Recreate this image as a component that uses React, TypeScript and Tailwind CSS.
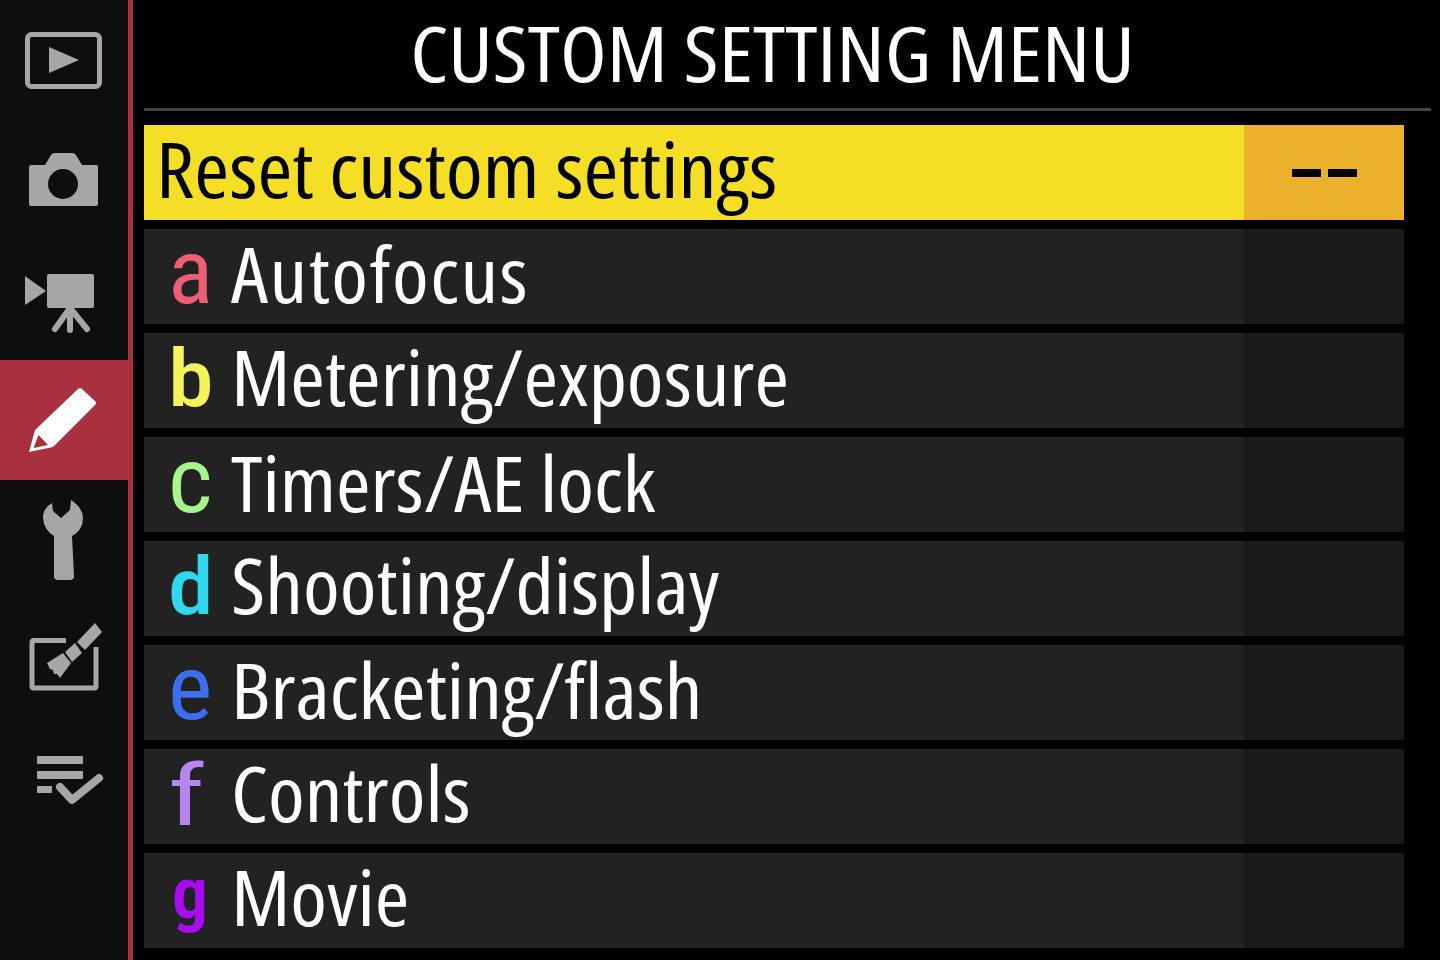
const iconGrey = '#a6a6a6';

const PlayIcon = () => (
  <svg width="128" height="120" viewBox="0 0 128 120" fill={iconGrey}>
    <rect x="27.5" y="34.5" width="72" height="52" rx="4" fill="none" stroke={iconGrey} strokeWidth="5" />
    <path d="M49 47 L79 60 L49 73 Z" />
  </svg>
);

const CameraIcon = () => (
  <svg width="128" height="120" viewBox="0 0 128 120" fill={iconGrey}>
    <path
      fillRule="evenodd"
      d="M31 45 H45 L51 35 Q52 33 55 33 H72 Q75 33 76 35 L82 45 H96 Q98 45 98 47 V84 Q98 86 96 86 H31 Q29 86 29 84 V47 Q29 45 31 45 Z M63 49 A15 15 0 1 0 63.01 79 A15 15 0 1 0 63 49 Z"
    />
  </svg>
);

const MovieIcon = () => (
  <svg width="128" height="120" viewBox="0 0 128 120" fill={iconGrey}>
    <path d="M25 36 L46 51 L25 65 Z" />
    <rect x="47" y="34" width="47" height="34" rx="2" />
    <path d="M70 66 V90 M70 68 L55 89 M70 68 L87 89" stroke={iconGrey} strokeWidth="6" fill="none" strokeLinecap="round" />
  </svg>
);

const PencilIcon = () => (
  <svg width="128" height="120" viewBox="0 0 128 120" fill="#ffffff">
    <path
      fillRule="evenodd"
      d="M78 29 Q80 27 82 29 L95 41 Q97 43 95 45 L53 87 L29 92 L35 70 Z M38.5 75 L33.5 88 L48 85 Z"
    />
  </svg>
);

const WrenchIcon = () => (
  <svg width="128" height="120" viewBox="0 0 128 120" fill={iconGrey}>
    <path d="M52 23 Q43 28 43 38 Q44 50 54 56 L54 96 Q54 100 58 100 H70 Q74 100 74 96 L72 56 Q83 50 83 38 Q83 28 71 20 L70 30 L61 38 L53 31 Z" />
  </svg>
);

const RetouchIcon = () => (
  <svg width="128" height="120" viewBox="0 0 128 120" fill={iconGrey}>
    <path d="M66 40.5 H34 Q32 40.5 32 42.5 V86 Q32 88 34 88 H94 Q96 88 96 86 V47" fill="none" stroke={iconGrey} strokeWidth="5" />
    <path d="M95 23 L102 32 L85 50 L77 42 Z" />
    <path d="M75 43 L82 53 L72 62 L65 52 Z" />
    <path d="M63 53 L71 63 L60 78 L57 74 L54 74 L53 70 L50 69 L47 63 Z" />
  </svg>
);

const MyMenuIcon = () => (
  <svg width="128" height="120" viewBox="0 0 128 120" fill={iconGrey}>
    <rect x="37" y="36" width="46" height="8" rx="1" />
    <rect x="37" y="51" width="46" height="8" rx="1" />
    <rect x="37" y="66" width="15" height="7" rx="1" />
    <path d="M60 67 L72 80 L99 58" fill="none" stroke={iconGrey} strokeWidth="8" strokeLinecap="round" strokeLinejoin="round" />
  </svg>
);

const tabs = [
  { id: 'play', icon: <PlayIcon /> },
  { id: 'photo', icon: <CameraIcon /> },
  { id: 'movie', icon: <MovieIcon /> },
  { id: 'custom', icon: <PencilIcon />, active: true },
  { id: 'setup', icon: <WrenchIcon /> },
  { id: 'retouch', icon: <RetouchIcon /> },
  { id: 'mymenu', icon: <MyMenuIcon /> },
];

// the coloured letters are not one consistent face, so each gets its own size
const rows = [
  { letter: 'a', label: 'Autofocus', labelFix: 'tracking-[1.4px]', color: 'text-[#ec5f72] text-[90px] scale-x-[1.05]' },
  { letter: 'b', label: 'Metering/exposure', labelFix: '', color: 'text-[#f3f35c] text-[80px] font-medium scale-x-[1.15]' },
  { letter: 'c', label: 'Timers/AE lock', labelFix: '', color: 'text-[#a5f48c] text-[92px] scale-x-[1.05]' },
  { letter: 'd', label: 'Shooting/display', labelFix: '', color: 'text-[#2fd8ee] text-[80px] font-medium scale-x-[1.15]' },
  { letter: 'e', label: 'Bracketing/flash', labelFix: '', color: 'text-[#3b6ff0] text-[90px] scale-x-[1.05]' },
  { letter: 'f', label: 'Controls', labelFix: '', color: 'text-[#b585f0] text-[86px] scale-x-[1.35] translate-y-[3px]' },
  { letter: 'g', label: 'Movie', labelFix: '', color: 'text-[#a80cf0] text-[72px] font-semibold translate-x-[4px] -translate-y-[8px]' },
];

export default function App() {
  return (
    <div className="flex h-[960px] w-[1440px] overflow-hidden bg-black font-['Open_Sans',sans-serif] text-white">
      <div className="h-full w-[133px] shrink-0 border-r-[5px] border-[#a8303f] bg-[#0e0e0e]">
        {tabs.map((t) => (
          <div key={t.id} className={t.active ? 'h-[120px] bg-[#a8303f]' : 'h-[120px]'}>
            {t.icon}
          </div>
        ))}
      </div>

      <div className="min-w-0 flex-1 pl-[11px]">
        <div className="mr-[9px] flex h-[111px] items-center justify-center border-b-[3px] border-[#444444] pb-[4px] pr-[30px] text-[77px] leading-none whitespace-nowrap font-stretch-condensed">
          <span className="scale-x-[1.113]">CUSTOM SETTING MENU</span>
        </div>

        <div className="mt-[14px] flex w-[1260px] flex-col gap-[9px]">
          <div className="flex h-[95px] bg-[#f5de26] text-black">
            <div className="flex-1 pl-[12px] text-[77px] leading-[88px] whitespace-nowrap font-stretch-condensed">
              <span className="inline-block origin-left scale-x-[1.094]">Reset custom settings</span>
            </div>
            <div className="flex w-[160px] items-center justify-center gap-[7px] bg-[#ebb12b]">
              <span className="h-[8px] w-[29px] bg-black" />
              <span className="h-[8px] w-[29px] bg-black" />
            </div>
          </div>

          {rows.map((r) => (
            <div key={r.letter} className="flex h-[95px] bg-[#222222]">
              <div className="flex flex-1 items-baseline pt-[1px] leading-[86px]">
                <div className="w-[87px] pl-[24px]">
                  <span className={`inline-block origin-left font-['Roboto',sans-serif] font-stretch-condensed ${r.color}`}>{r.letter}</span>
                </div>
                <span className={`inline-block origin-left scale-x-[1.085] text-[77px] whitespace-nowrap font-stretch-condensed ${r.labelFix}`}>{r.label}</span>
              </div>
              <div className="w-[160px] bg-[#191919]" />
            </div>
          ))}
        </div>
      </div>
    </div>
  );
}
